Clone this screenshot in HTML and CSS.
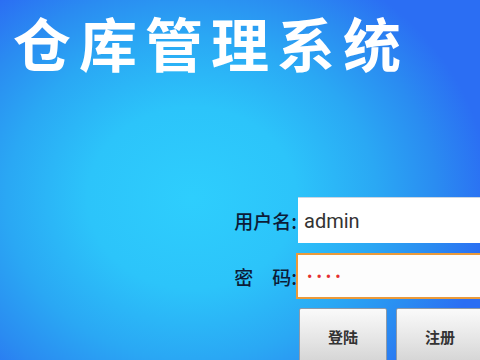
FILE: index.html
```html
<!DOCTYPE html>
<html lang="zh">
<head>
<meta charset="utf-8">
<link rel="stylesheet" href="styles.css">
</head>
<body>
<div class="screen">
  <h1 class="title">仓库管理系统</h1>
  <div class="form">
    <label class="label">用户名:</label>
    <div class="input user">admin</div>
    <label class="label">密　码:</label>
    <div class="input pass">••••</div>
    <div class="spacer"></div>
    <div class="buttons">
      <div class="btn">登陆</div>
      <div class="btn">注册</div>
    </div>
  </div>
</div>
</body>
</html>
```
FILE: styles.css
```css
html, body {
  margin: 0;
  padding: 0;
}
.screen {
  width: 480px;
  height: 360px;
  overflow: hidden;
  background:
    radial-gradient(ellipse 62% 72% at 40% 55%, #2ecefd 0%, #2cc4fa 35%, #2aa8f4 62%, #2a8cf1 82%, #2b6ef3 100%);
  font-family: "Noto Sans CJK SC", "Noto Sans", sans-serif;
}
.title {
  margin: 0;
  padding: 0 20px 0 13px;
  font-size: 58px;
  line-height: normal;
  font-weight: 700;
  color: #ffffff;
  letter-spacing: 8px;
  white-space: nowrap;
}
.form {
  margin: 113px 0 0 230px;
  display: grid;
  grid-template-columns: 68px 200px;
  grid-template-rows: 46px 46px 54px;
  row-gap: 10px;
}
.label {
  display: flex;
  align-items: center;
  justify-content: flex-end;
  font-size: 19px;
  font-weight: 500;
  color: #0c1c38;
  padding-right: 1px;
  white-space: nowrap;
}
.input {
  display: flex;
  align-items: center;
  box-sizing: border-box;
  font-family: "Roboto", "Liberation Sans", sans-serif;
  font-size: 20px;
  white-space: nowrap;
}
.user {
  background: #ffffff;
  border-top: 1px solid #c9d6e4;
  padding-left: 6px;
  color: #333333;
}
.pass {
  background: #fdfdfd;
  border: 2px solid #eb9a3a;
  padding-left: 9px;
  color: #e53030;
  font-size: 16px;
  letter-spacing: 4px;
  margin-left: -2px;
}
.spacer {}
.buttons {
  display: flex;
  gap: 9px;
  margin-top: -1px;
  margin-left: 1px;
}
.btn {
  width: 88px;
  flex: none;
  box-sizing: border-box;
  border: 1px solid #8f9aa8;
  border-radius: 2px;
  background: linear-gradient(#fafafa, #e4e4e4 60%, #d4d4d4);
  display: flex;
  align-items: center;
  justify-content: center;
  font-size: 15px;
  font-weight: 700;
  color: #333333;
  height: 56px;
}
```
